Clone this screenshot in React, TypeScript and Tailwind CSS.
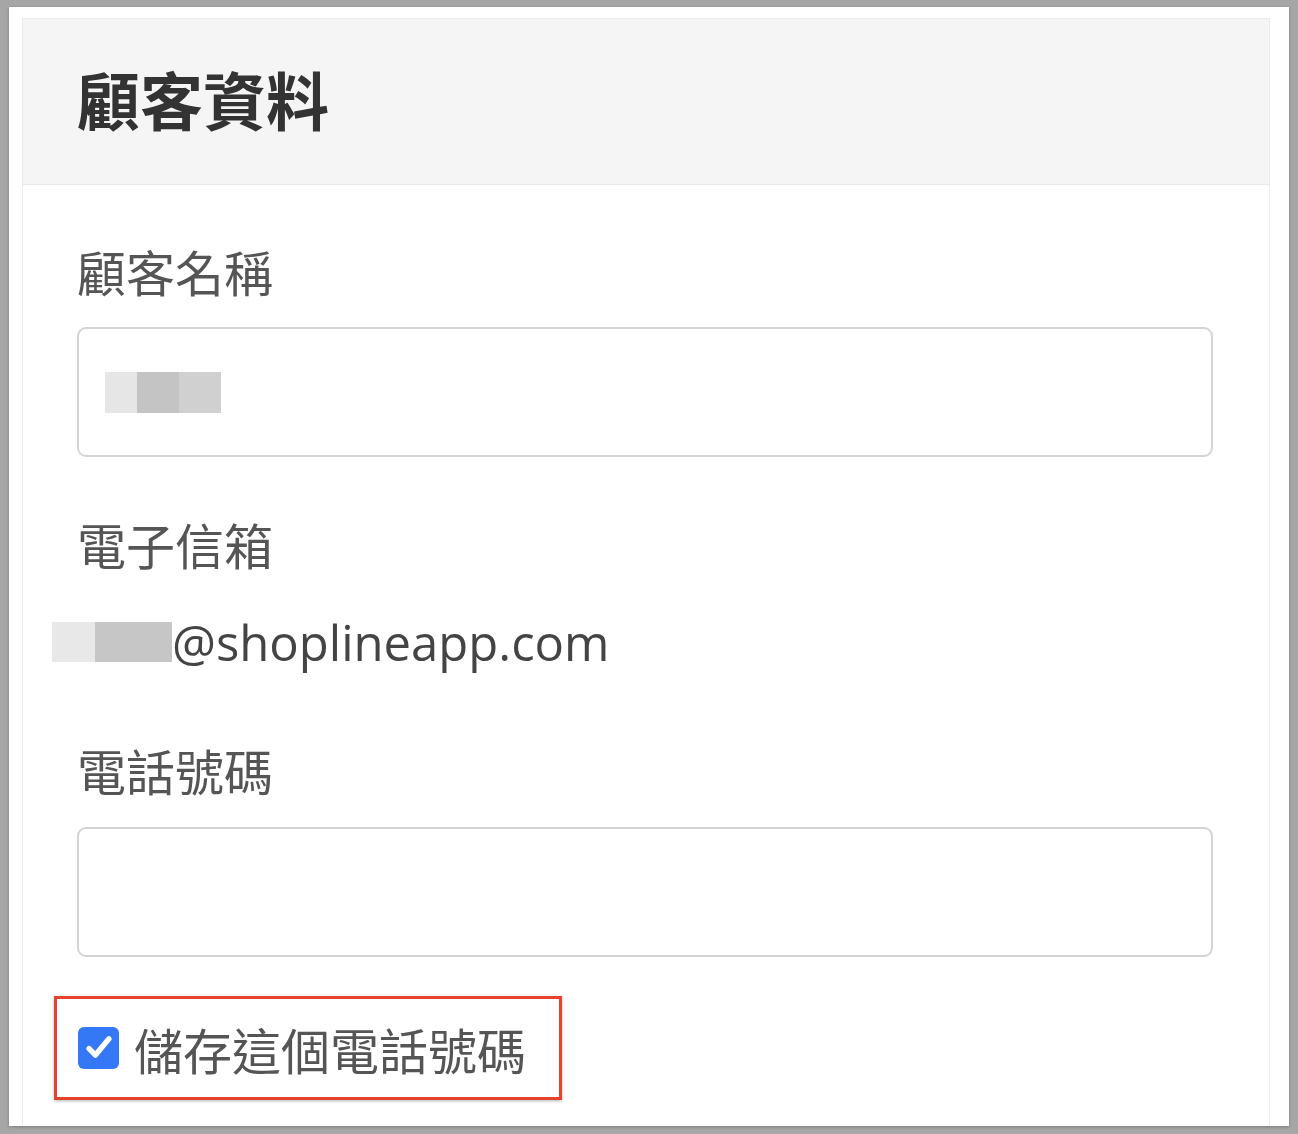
import React from 'react';

const cjk = "font-['Noto_Sans_CJK_TC','Noto_Sans_CJK_SC',sans-serif]";

const Label: React.FC<{ text: string; className?: string }> = ({ text, className = '' }) => (
  <div className={`${cjk} h-[60px] leading-[54px] text-[49px] text-[#555] ${className}`}>{text}</div>
);

export default function App() {
  return (
    <div className="w-[1298px] h-[1134px] bg-[#a6a6a6] pt-[7px] pl-[9px] pr-[9px] pb-[8px] overflow-hidden">
      <div className="h-full bg-white pl-[13px] pr-[19px] pt-[11px] shadow-[0_1px_3px_rgba(0,0,0,0.25)]">
        <div className="h-full border border-b-0 border-[#ebebeb] flex flex-col">
          {/* header */}
          <div className="h-[166px] bg-[#f5f5f5] border-b border-[#e8e8e8] flex items-center pl-[54px] pb-[9px]">
            <h1 className={`${cjk} text-[63px] font-bold text-[#333] leading-none`}>顧客資料</h1>
          </div>

          {/* body */}
          <div className="pl-[54px] pr-[56px] pt-[59px]">
            <Label text="顧客名稱" />
            <div className="mt-[23px] h-[130px] border-2 border-[#d4d4d4] rounded-[9px] flex items-center pl-[26px]">
              <div className="flex h-[41px]">
                <div className="w-[32px] bg-[#e6e6e6]" />
                <div className="w-[42px] bg-[#c4c4c4]" />
                <div className="w-[42px] bg-[#d0d0d0]" />
              </div>
            </div>

            <Label text="電子信箱" className="mt-[60px]" />
            <div className="mt-[35px] h-[60px] flex items-center -ml-[25px]">
              <div className="flex h-[40px]">
                <div className="w-[43px] bg-[#e8e8e8]" />
                <div className="w-[77px] bg-[#c6c6c6]" />
              </div>
              <span className="font-['Open_Sans',sans-serif] text-[49px] text-[#444] leading-none">@shoplineapp.com</span>
            </div>

            <Label text="電話號碼" className="mt-[71px]" />
            <div className="mt-[24px] h-[130px] border-2 border-[#d4d4d4] rounded-[9px]" />

            <div className="mt-[39px] -ml-[23px] w-[508px] h-[104px] border-[3px] border-[#e5432b] shadow-[0_1px_3px_rgba(0,0,0,0.3)] flex items-center pl-[21px] gap-[15px]">
              <div className="w-[41px] h-[42px] rounded-[6px] bg-[#3478f6] flex items-center justify-center">
                <svg viewBox="0 0 24 24" className="w-[34px] h-[34px]" fill="none" stroke="white" strokeWidth="3.8" strokeLinecap="round" strokeLinejoin="round">
                  <path d="M5 12.5l4.5 4.5L19 5.5" />
                </svg>
              </div>
              <span className={`${cjk} text-[49px] text-[#555] leading-none`}>儲存這個電話號碼</span>
            </div>
          </div>
        </div>
      </div>
    </div>
  );
}
